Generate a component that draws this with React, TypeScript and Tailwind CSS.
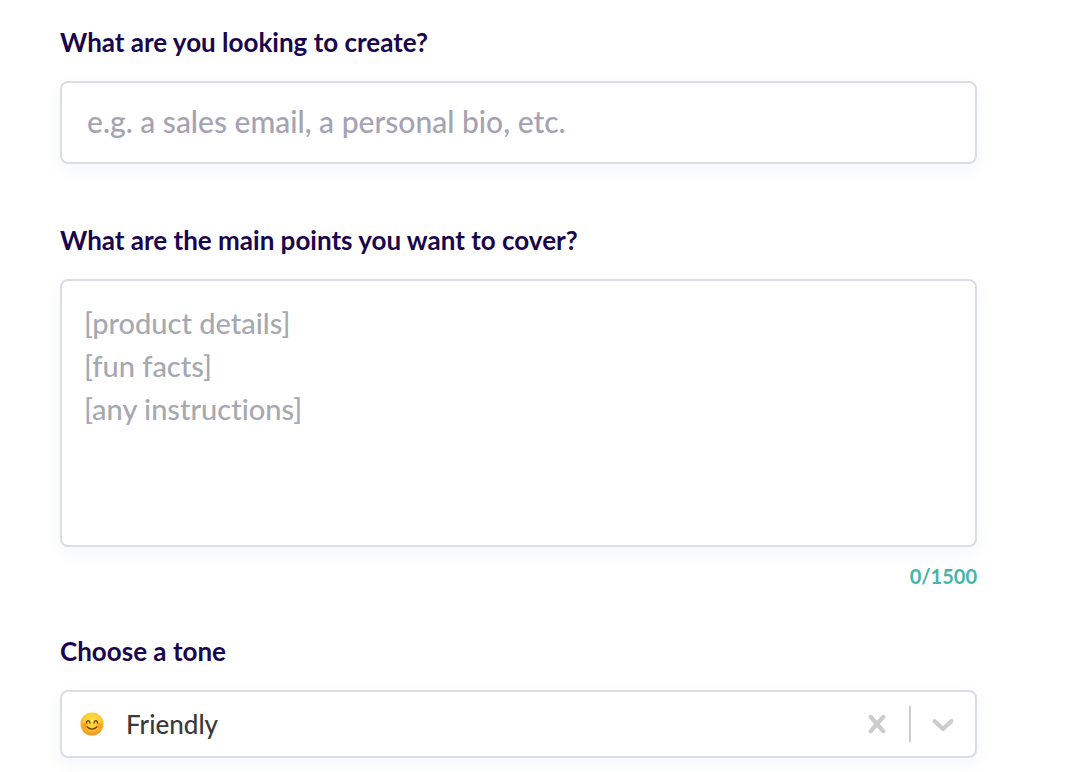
import { useState } from 'react'
import type { ReactNode } from 'react'

const MAX_POINTS = 1500

const TONES = ['Friendly', 'Luxury', 'Relaxed', 'Professional', 'Bold', 'Adventurous']

// Shared by all three controls so their frames stay identical.
const fieldCls =
  'block w-full rounded-lg border-2 border-[#dcdbe8] bg-white shadow-[0_6px_16px_rgba(60,110,150,0.06)] outline-none focus:border-[#b9b6d6]'

function Label({ htmlFor, children }: { htmlFor: string; children: ReactNode }) {
  return (
    <label htmlFor={htmlFor} className="mb-[23px] block text-[26px] leading-8 font-bold text-[#19064c]">
      {children}
    </label>
  )
}

function SmileIcon() {
  return (
    <svg viewBox="0 0 24 24" className="size-6" aria-hidden="true">
      <defs>
        <radialGradient id="face" cx="0.5" cy="0.36" r="0.66">
          <stop offset="0" stopColor="#ffe54a" />
          <stop offset="0.55" stopColor="#ffc92e" />
          <stop offset="1" stopColor="#f08a1c" />
        </radialGradient>
        <radialGradient id="cheek">
          <stop offset="0" stopColor="#fb7a2a" stopOpacity="0.75" />
          <stop offset="1" stopColor="#fb7a2a" stopOpacity="0" />
        </radialGradient>
      </defs>
      <circle cx="12" cy="12" r="11.5" fill="url(#face)" />
      <circle cx="5" cy="13.5" r="3.5" fill="url(#cheek)" />
      <circle cx="19" cy="13.5" r="3.5" fill="url(#cheek)" />
      <g fill="none" stroke="#6b3c0c" strokeWidth="1.3" strokeLinecap="round">
        <path d="M6.4 11.2c.3-1.8 1-2.6 1.8-2.6s1.5.8 1.8 2.6" />
        <path d="M14 11.2c.3-1.8 1-2.6 1.8-2.6s1.5.8 1.8 2.6" />
        <path d="M7.2 15c2.6 2.7 7 2.7 9.6 0" />
      </g>
    </svg>
  )
}

function ClearIcon() {
  return (
    <svg viewBox="0 0 20 20" className="size-9 fill-current" aria-hidden="true">
      <path d="M14.348 14.849c-0.469 0.469-1.229 0.469-1.697 0l-2.651-3.030-2.651 3.029c-0.469 0.469-1.229 0.469-1.697 0-0.469-0.469-0.469-1.229 0-1.697l2.758-3.15-2.759-3.152c-0.469-0.469-0.469-1.228 0-1.697s1.228-0.469 1.697 0l2.652 3.031 2.651-3.031c0.469-0.469 1.228-0.469 1.697 0s0.469 1.229 0 1.697l-2.758 3.152 2.758 3.15c0.469 0.469 0.469 1.229 0 1.698z" />
    </svg>
  )
}

function ChevronIcon() {
  return (
    <svg viewBox="0 0 20 20" className="size-9 fill-current" aria-hidden="true">
      <path d="M4.516 7.548c0.436-0.446 1.043-0.481 1.576 0l3.908 3.747 3.908-3.747c0.533-0.481 1.141-0.446 1.574 0 0.436 0.445 0.408 1.197 0 1.615-0.406 0.418-4.695 4.502-4.695 4.502-0.217 0.223-0.502 0.335-0.787 0.335s-0.57-0.112-0.789-0.335c0 0-4.287-4.084-4.695-4.502s-0.436-1.17 0-1.615z" />
    </svg>
  )
}

export default function App() {
  const [topic, setTopic] = useState('')
  const [points, setPoints] = useState('')
  const [tone, setTone] = useState('Friendly')

  return (
    <form className="min-h-screen bg-white pt-[26px] pr-[103px] pl-[60px] font-['Lato',sans-serif] [font-variant-ligatures:none]">
      <div className="mb-[60px]">
        <Label htmlFor="topic">What are you looking to create?</Label>
        <input
          id="topic"
          type="text"
          value={topic}
          onChange={(e) => setTopic(e.target.value)}
          placeholder="e.g. a sales email, a personal bio, etc."
          className={`${fieldCls} h-[83px] px-[25px] pb-1 text-[30px] font-medium text-[#333] placeholder:text-[#a5a3b3]`}
        />
      </div>

      <div className="mb-[47px]">
        <Label htmlFor="points">What are the main points you want to cover?</Label>
        <textarea
          id="points"
          value={points}
          maxLength={MAX_POINTS}
          onChange={(e) => setPoints(e.target.value)}
          placeholder={'[product details]\n[fun facts]\n[any instructions]'}
          className={`${fieldCls} h-[268px] resize-none px-[22px] py-5 text-[29px] leading-[43px] font-medium text-[#333] placeholder:text-[#a6a9b0]`}
        />
        <p className="mt-[17px] text-right text-[20px] leading-6 font-bold text-[#48b3a8]">
          {points.length}/{MAX_POINTS}
        </p>
      </div>

      <div>
        <Label htmlFor="tone">Choose a tone</Label>
        <div className="relative">
          <select
            id="tone"
            value={tone}
            onChange={(e) => setTone(e.target.value)}
            className={`${fieldCls} h-[68px] appearance-none pr-[130px] pl-16 text-[26px] font-medium text-[#3a3a3a]`}
          >
            <option value="" />
            {TONES.map((t) => (
              <option key={t}>{t}</option>
            ))}
          </select>
          {tone && (
            <span className="pointer-events-none absolute inset-y-0 left-5 flex items-center">
              <SmileIcon />
            </span>
          )}
          {/* Only the clear button takes clicks, the rest falls through to the select. */}
          <div className="pointer-events-none absolute inset-y-0 right-4 flex items-center text-[#cccccc]">
            <button
              type="button"
              aria-label="Clear tone"
              onClick={() => setTone('')}
              className="pointer-events-auto cursor-pointer"
            >
              <ClearIcon />
            </button>
            <span className="mx-[14px] h-9 w-[2px] bg-[#cccccc]" />
            <ChevronIcon />
          </div>
        </div>
      </div>
    </form>
  )
}
